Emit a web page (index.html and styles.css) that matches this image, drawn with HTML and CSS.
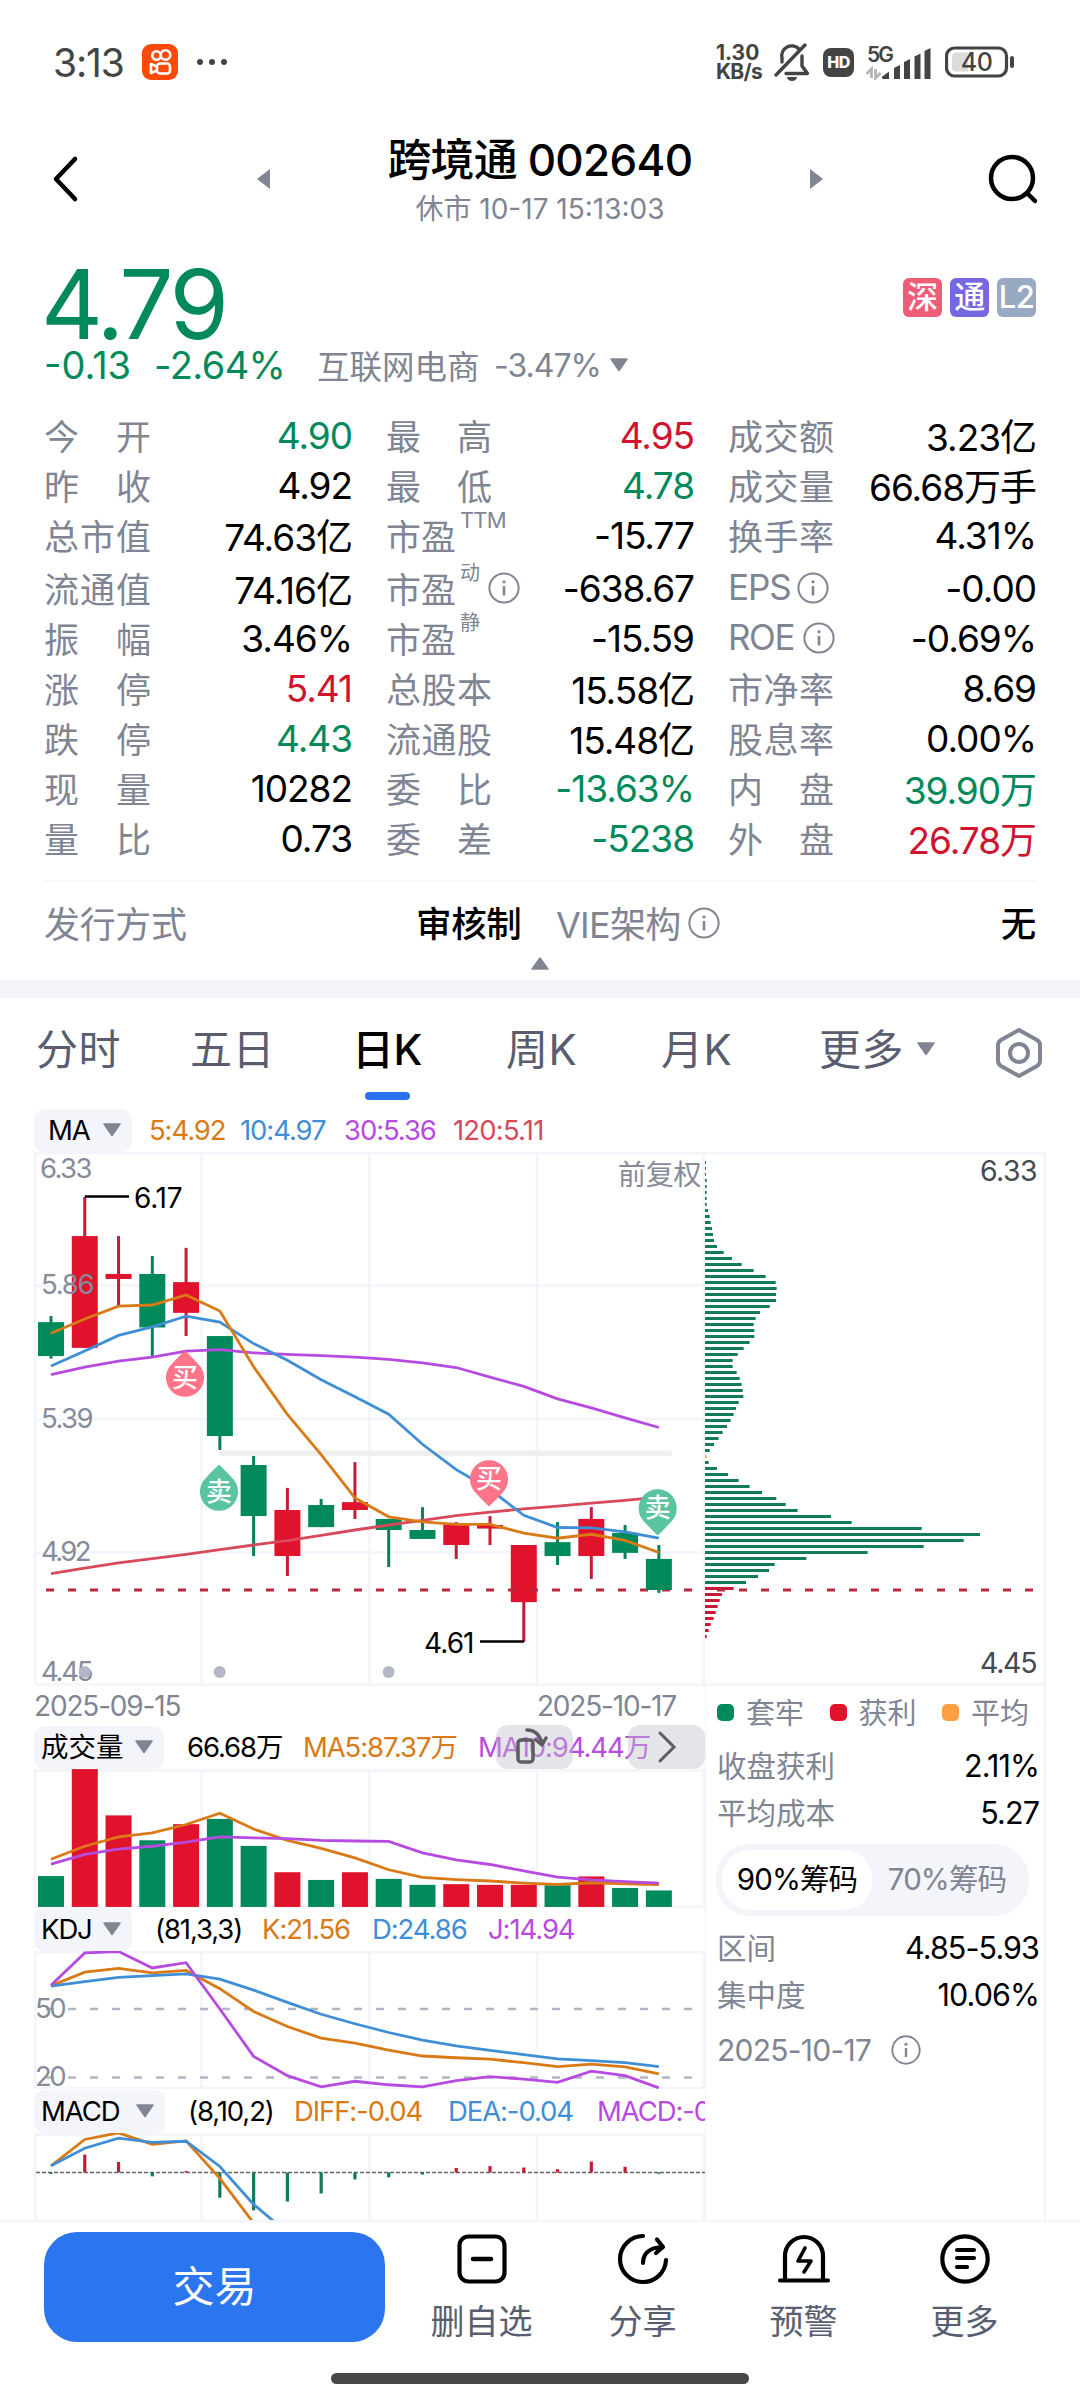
FILE: index.html
```html
<!DOCTYPE html>
<html lang="zh-CN">
<head>
<meta charset="utf-8">
<title>跨境通 002640</title>
<link rel="stylesheet" href="styles.css">
</head>
<body>
<svg class="defs" width="0" height="0">
  <symbol id="info" viewBox="0 0 32 32"><circle cx="16" cy="16" r="14.6" fill="none" stroke="#808593" stroke-width="2"/><circle cx="16" cy="9.8" r="1.6" fill="#808593"/><path d="M16 14v9.5" stroke="#808593" stroke-width="2.6"/></symbol>
  <symbol id="down" viewBox="0 0 20 14"><path d="M2 1h16L10 12.500z" fill="#808593" stroke="#808593" stroke-width="1.500" stroke-linejoin="round"/></symbol>
</svg>

<div class="status">
  <span class="clock">3:13</span>
  <svg class="app" width="36" height="36" viewBox="0 0 36 36"><rect width="36" height="36" rx="9" fill="#fe4a08"/><g fill="none" stroke="#fff" stroke-width="2.600"><circle cx="14.500" cy="11.500" r="4.200"/><circle cx="23.500" cy="11" r="4.800"/><rect x="15" y="19.500" width="13" height="10" rx="3"/><path d="M15 22.500l-6-2.500v9l6-2.500" stroke-linejoin="round"/></g></svg>
  <svg width="32" height="8" viewBox="0 0 32 8"><g fill="#444"><circle cx="4" cy="4" r="3"/><circle cx="16" cy="4" r="3"/><circle cx="28" cy="4" r="3"/></g></svg>
  <div class="speed"><span class="num">1.30</span><span>KB/s</span></div>
  <svg class="bell" width="36" height="40" viewBox="0 0 36 40"><g fill="none" stroke="#444" stroke-width="3.400" stroke-linecap="round" stroke-linejoin="round"><path d="M8 20v-4a10 10 0 0 1 17-9M28 14v10l5.500 7.500H12"/><path d="M31 3L2 33"/></g><path d="M13 35h10a5 4 0 0 1-10 0z" fill="#444"/></svg>
  <span class="hd">HD</span>
  <svg class="signal" width="66" height="36" viewBox="0 0 66 36"><text x="1" y="18" class="t5g" textLength="27">5G</text><path d="M5.500 34V25L0.500 30M9.500 25v9l5-5" stroke="#b4b4b4" fill="none" stroke-width="2.800"/><g fill="#444"><path d="M18 35a1.500 1.500 0 0 1-1-3l6-4.500V35zM28 24l6-3V35h-6zM38 18l6-3V35h-6zM48.500 12.500l6-3V35h-6zM58.500 7l6-3V35h-6z"/></g></svg>
  <svg class="battery" width="70" height="32" viewBox="0 0 70 32"><rect x="1.500" y="2" width="60" height="28" rx="8" fill="none" stroke="#444" stroke-width="3.200"/><path d="M11 6.500h12v19h-12a4 4 0 0 1-4-4v-11a4 4 0 0 1 4-4z" fill="#dcdcdc"/><path d="M67 12v8" stroke="#444" stroke-width="4" stroke-linecap="round"/><text x="31.500" y="24.500" class="tbat" text-anchor="middle">40</text></svg>
</div>

<header class="head">
  <svg width="40" height="50" viewBox="0 0 40 50"><path d="M28 5L9 25l19 20" fill="none" stroke="#000" stroke-width="4.500" stroke-linecap="round" stroke-linejoin="round"/></svg>
  <svg width="14" height="20" viewBox="0 0 14 20"><path d="M13 0v20L0 10z" fill="#808593"/></svg>
  <div class="title"><h1>跨境通 <span>002640</span></h1><p>休市 10-17 15:13:03</p></div>
  <svg width="14" height="20" viewBox="0 0 14 20"><path d="M1 0v20L14 10z" fill="#808593"/></svg>
  <svg width="52" height="52" viewBox="0 0 52 52"><g fill="none" stroke="#000" stroke-width="4.500" stroke-linecap="round"><circle cx="25" cy="25" r="21"/><path d="M40 40l8 8"/></g></svg>
</header>

<section class="quote">
  <div class="price-row"><span class="price">4.79</span><span class="badge sz">深</span><span class="badge tong">通</span><span class="badge l2">L2</span></div>
  <div class="change"><span class="chg">-0.13</span><span class="pct">-2.64%</span><span class="ind">互联网电商</span><span class="indpct">-3.47%</span><svg width="20" height="14"><use href="#down"/></svg></div>
  <div class="stats" id="stats">
    <div class="row"><span class="lb"><i>今</i><i>开</i></span><b class="g">4.90</b><span class="lb"><i>最</i><i>高</i></span><b class="r">4.95</b><span class="lb"><i>成</i><i>交</i><i>额</i></span><b>3.23亿</b></div>
    <div class="row"><span class="lb"><i>昨</i><i>收</i></span><b>4.92</b><span class="lb"><i>最</i><i>低</i></span><b class="g">4.78</b><span class="lb"><i>成</i><i>交</i><i>量</i></span><b>66.68万手</b></div>
    <div class="row"><span class="lb"><i>总</i><i>市</i><i>值</i></span><b>74.63亿</b><span class="lb pe">市盈<sup class="ttm">TTM</sup></span><b>-15.77</b><span class="lb"><i>换</i><i>手</i><i>率</i></span><b>4.31%</b></div>
    <div class="row tall"><span class="lb"><i>流</i><i>通</i><i>值</i></span><b>74.16亿</b><span class="lb pe">市盈<sup>动</sup><svg class="info"><use href="#info"/></svg></span><b>-638.67</b><span class="lb en"><em class="eps">EPS</em><svg class="info"><use href="#info"/></svg></span><b>-0.00</b></div>
    <div class="row"><span class="lb"><i>振</i><i>幅</i></span><b>3.46%</b><span class="lb pe">市盈<sup>静</sup></span><b>-15.59</b><span class="lb en"><em class="roe">ROE</em><svg class="info"><use href="#info"/></svg></span><b>-0.69%</b></div>
    <div class="row"><span class="lb"><i>涨</i><i>停</i></span><b class="r">5.41</b><span class="lb"><i>总</i><i>股</i><i>本</i></span><b>15.58亿</b><span class="lb"><i>市</i><i>净</i><i>率</i></span><b>8.69</b></div>
    <div class="row"><span class="lb"><i>跌</i><i>停</i></span><b class="g">4.43</b><span class="lb"><i>流</i><i>通</i><i>股</i></span><b>15.48亿</b><span class="lb"><i>股</i><i>息</i><i>率</i></span><b>0.00%</b></div>
    <div class="row"><span class="lb"><i>现</i><i>量</i></span><b>10282</b><span class="lb"><i>委</i><i>比</i></span><b class="g">-13.63%</b><span class="lb"><i>内</i><i>盘</i></span><b class="g">39.90万</b></div>
    <div class="row"><span class="lb"><i>量</i><i>比</i></span><b>0.73</b><span class="lb"><i>委</i><i>差</i></span><b class="g">-5238</b><span class="lb"><i>外</i><i>盘</i></span><b class="r">26.78万</b></div>
  </div>
  <div class="issue"><span>发行方式</span><strong>审核制</strong><span class="vie">VIE架构</span><svg class="info"><use href="#info"/></svg><strong class="none">无</strong></div>
  <svg class="fold" width="20" height="14" viewBox="0 0 20 14"><path d="M2 13h16L10 2z" fill="#808593" stroke="#808593" stroke-width="1.500" stroke-linejoin="round"/></svg>
</section>

<nav class="tabs">
  <span class="t1">分时</span><span class="t2">五日</span><span class="t3 on">日K</span><span class="t4">周K</span><span class="t5">月K</span><span class="t6">更多</span><svg class="more" width="20" height="14"><use href="#down"/></svg>
  <svg class="hex" width="50" height="52" viewBox="0 0 50 52"><g fill="none" stroke="#808593" stroke-width="4" stroke-linejoin="round"><path d="M25 3l18 10q3 2 3 5v16q0 3-3 5L25 49 7 39q-3-2-3-5V18q0-3 3-5z"/><circle cx="25" cy="26" r="9"/></g></svg>
</nav>

<section class="charts">
  <div class="ind-row ma"><span class="chip c-ma">MA<svg width="20" height="14"><use href="#down"/></svg></span><span class="o m1">5:4.92</span><span class="bl m2">10:4.97</span><span class="p m3">30:5.36</span><span class="rd m4">120:5.11</span></div>
  <svg id="price" width="1012" height="534" viewBox="34 1152 1012 534">
    <g fill="none" stroke="#f4f5fa" stroke-width="2.500"><path d="M34 1153.300H1046M34 1285.500H704M34 1419H704M34 1552.500H704M34 1684.600H1046"/><path d="M35.300 1152v534M201.700 1152v534M369.500 1152v534M537 1152v534M703.700 1152v534M1045 1152v534"/></g>
    <path d="M220 1453.300H671.700" stroke="#efefef" stroke-width="5.500"/>
    <g id="candles"></g>
    <g id="chips"></g>
    <path d="M46 1590H700M717 1590H1036" stroke="#b92740" stroke-width="3" stroke-dasharray="8 14"/>
    <g id="over"></g>
    <g class="axis"><text x="40" y="1178" textLength="52">6.33</text><text x="41" y="1294" textLength="53">5.86</text><text x="41" y="1428" textLength="52">5.39</text><text x="41" y="1561" textLength="50">4.92</text><text x="41" y="1681" textLength="52">4.45</text></g>
    <text x="618" y="1185" class="fq" textLength="83">前复权</text>
    <g class="axis dark"><text x="980" y="1181" textLength="57">6.33</text><text x="980" y="1673" textLength="57">4.45</text></g>
    <g fill="none" stroke="#000" stroke-width="2.500"><path d="M84.700 1196.400H129M480 1641.400H524"/></g>
    <g class="mark"><text x="134" y="1208" textLength="48">6.17</text><text x="424" y="1653" textLength="50">4.61</text></g>
    <g fill="#b1b7c6"><circle cx="84.700" cy="1672" r="6"/><circle cx="219.700" cy="1672" r="6"/><circle cx="388.600" cy="1672" r="6"/></g>
    <g id="pins"></g>
  </svg>
  <div class="lower">
    <div class="panes">
      <div class="dates"><span>2025-09-15</span><span>2025-10-17</span></div>
      <div class="ind-row volrow"><span class="chip c-vol"><em>成交量</em><svg width="20" height="14"><use href="#down"/></svg></span><span class="up v1">66.68万</span><span class="up o v2">MA5:87.37万</span><span class="up p v3">MA10:94.44万</span>
        <div class="float rot"><svg width="34" height="40" viewBox="0 0 34 40"><g fill="none" stroke="#5d5e62" stroke-width="3.500" stroke-linecap="round" stroke-linejoin="round"><rect x="4" y="13" width="15" height="22" rx="3"/><path d="M13 3c8 0 13 5 15 14M22 13l6 5 4-7"/></g></svg></div>
        <div class="float next"><svg width="20" height="34" viewBox="0 0 20 34"><path d="M3 3l14 14L3 31" fill="none" stroke="#5d5e62" stroke-width="3" stroke-linecap="round"/></svg></div>
      </div>
      <svg id="vol" width="671" height="139" viewBox="34 1769 671 139"><path class="grid" d="M34 1770.500H705M34 1906.700H705M35.300 1769v139M201.700 1769v139M369.500 1769v139M537 1769v139M703.700 1769v139"/></svg>
      <div class="ind-row h43"><span class="chip c-kdj">KDJ<svg width="20" height="14"><use href="#down"/></svg></span><span class="k1">(81,3,3)</span><span class="o k2">K:21.56</span><span class="bl k3">D:24.86</span><span class="p k4">J:14.94</span></div>
      <svg id="kdj" width="671" height="138" viewBox="34 1951 671 138"><path class="grid" d="M34 1952.300H705M34 2088H705M35.300 1951v138M201.700 1951v138M369.500 1951v138M537 1951v138M703.700 1951v138"/><path d="M46 2009H695M46 2077.500H695" stroke="#b1b7c6" stroke-width="2.500" stroke-dasharray="8 14"/><g class="axis"><text x="35" y="2018" textLength="31">50</text><text x="35" y="2086" textLength="31">20</text></g></svg>
      <div class="ind-row"><span class="chip c-macd">MACD<svg width="20" height="14"><use href="#down"/></svg></span><span class="d1">(8,10,2)</span><span class="o d2">DIFF:-0.04</span><span class="bl d3">DEA:-0.04</span><span class="p d4">MACD:-0.01</span></div>
      <svg id="macd" width="671" height="87" viewBox="34 2133 671 87"><path class="grid" d="M34 2134.500H705M35.300 2133v87M201.700 2133v87M369.500 2133v87M537 2133v87M703.700 2133v87"/><path d="M36 2172.500H705" stroke="#666" stroke-width="1.600" stroke-dasharray="4 2"/></svg>
    </div>
    <aside class="cost">
      <div class="legend"><i class="sq sg"></i><span>套牢</span><i class="sq sr"></i><span>获利</span><i class="sq so"></i><span>平均</span></div>
      <div class="kv"><span>收盘获利</span><b>2.11%</b></div>
      <div class="kv"><span>平均成本</span><b>5.27</b></div>
      <div class="seg"><span class="sel">90%筹码</span><span>70%筹码</span></div>
      <div class="kv"><span>区间</span><b>4.85-5.93</b></div>
      <div class="kv"><span>集中度</span><b>10.06%</b></div>
      <div class="cdate"><span>2025-10-17</span><svg class="info"><use href="#info"/></svg></div>
    </aside>
  </div>
</section>

<footer class="bar">
  <button class="trade">交易</button>
  <div class="act"><svg width="60" height="60" viewBox="0 0 60 60"><g fill="none" stroke="#000" stroke-width="4.200" stroke-linecap="round"><rect x="7.500" y="7.500" width="45" height="45" rx="9"/><path d="M21 30h18" stroke-width="4.500"/></g></svg><span>删自选</span></div>
  <div class="act"><svg width="60" height="60" viewBox="0 0 60 60"><g fill="none" stroke="#000" stroke-width="4.200" stroke-linecap="round" stroke-linejoin="round"><path d="M30 7A23 23 0 1 0 53 31"/><path d="M30 34c0-9 6-15 18-16M44 10.500l6 7.500-7 6"/></g></svg><span>分享</span></div>
  <div class="act"><svg width="60" height="60" viewBox="0 0 60 60"><g fill="none" stroke="#000" stroke-width="4.200" stroke-linecap="round" stroke-linejoin="round"><path d="M11 51V27a19 19 0 0 1 38 0v24M6 51.500h48"/><path d="M31 19l-7 13h13l-7 11" stroke-width="3.600"/></g></svg><span>预警</span></div>
  <div class="act"><svg width="60" height="60" viewBox="0 0 60 60"><g fill="none" stroke="#000" stroke-width="4.200" stroke-linecap="round"><circle cx="30" cy="30" r="22.700"/><path d="M22 21h17M22 29h17M22 38h10"/></g></svg><span>更多</span></div>
  <div class="gesture"></div>
</footer>
<script src="chart.js"></script>
</body>
</html>
```
FILE: styles.css
```css
* { box-sizing: border-box; margin: 0; padding: 0; }
body { width: 1080px; height: 2400px; overflow: hidden; background: #fff; color: #000; font-family: Inter, "Noto Sans CJK SC", sans-serif; letter-spacing: -0.03em; white-space: nowrap; }
svg { display: block; flex: none; overflow: hidden; }
svg.defs { position: absolute; }
i, em { font-style: normal; }
b { font-weight: 400; }
.info { width: 32px; height: 32px; }

/* status bar */
.status { height: 130px; padding: 0 65px 6px 53px; display: flex; align-items: center; color: #444; }
.clock { font-size: 39px; width: 89px; letter-spacing: -0.03em; }
.app { margin-right: 18px; }
.speed { margin-left: auto; width: 58px; display: flex; flex-direction: column; font-size: 21px; line-height: 19px; font-weight: 700; letter-spacing: -0.035em; }
.speed .num { letter-spacing: 0; }
.bell { margin-right: 13px; }
.hd { width: 31px; height: 29px; border-radius: 8px; background: #444; color: #fff; font-size: 16px; font-weight: 800; line-height: 29px; text-align: center; margin-right: 12px; }
.signal { margin-right: 13px; }
.t5g { font-size: 21px; font-weight: 600; fill: #444; letter-spacing: 0; }
.tbat { font-size: 25px; fill: #444; font-weight: 500; }

/* header */
.head { height: 98px; display: flex; align-items: center; padding: 0 41px 0 47px; }
.head svg:nth-child(2) { margin-left: 170px; }
.title { width: 538px; text-align: center; }
.head svg:nth-child(4) { margin-right: 164px; }
.title h1 { font-size: 44px; line-height: 60px; font-weight: 500; letter-spacing: -0.02em; }
.title h1 span { font-weight: 450; letter-spacing: -0.015em; }
.title p { font-size: 28px; line-height: 38px; color: #808593; letter-spacing: 0; }
.head svg:last-child { margin-left: auto; }

/* quote */
.quote { height: 770px; border-bottom: 18px solid #f4f5fa; padding: 31px 44px 0; }
.price-row { display: flex; height: 90px; gap: 8px; align-items: center; }
.price { font-size: 96px; line-height: 90px; font-weight: 400; color: #008a5c; letter-spacing: -0.035em; margin: 0 auto 0 -3px; }
.badge { width: 39px; height: 39px; border-radius: 6px; color: #fff; font-size: 31px; line-height: 37px; font-weight: 500; text-align: center; margin-bottom: 13px; letter-spacing: -0.02em; }
.sz { background: #ee5d77; } .tong { background: #7668e0; } .l2 { background: #98a9c3; }
.change { display: flex; height: 32px; align-items: center; color: #808593; font-size: 33px; }
.chg, .pct { color: #008a5c; font-size: 38px; }
.chg { width: 110px; letter-spacing: 0; } .pct { width: 163px; letter-spacing: -0.015em; } .ind { width: 177px; letter-spacing: 0; font-size: 32.500px; margin-top: -2px; } .indpct { width: 115px; font-size: 32px; letter-spacing: -0.03em; }
.stats { margin-top: 29px; }
.row { display: flex; height: 50px; align-items: center; font-size: 37px; }
.row.tall { height: 53px; padding-top: 3px; }
.lb { display: flex; align-items: center; justify-content: space-between; width: 110px; font-size: 35px; color: #808593; letter-spacing: 0; padding: 0 3px 0 0; margin-top: -2px; }
.lb:nth-child(n + 2) { padding: 0 2px; }
.lb.pe, .lb.en { width: 200px; justify-content: flex-start; margin-right: -90px; }
.row b { width: 198px; text-align: right; letter-spacing: -0.028em; }
.row b:nth-child(2) { margin-right: 32px; }
.row b:nth-child(4) { width: 200px; margin-right: 32px; }
.row b:nth-child(6) { width: 200px; }
.lb sup { font-size: 20px; margin-left: 4px; align-self: flex-start; line-height: 23px; width: 28px; }
.lb .ttm { font-size: 22px; letter-spacing: -0.04em; }
.lb .info { margin-top: 2px; }
.eps { width: 69px; letter-spacing: -0.03em; } .roe { width: 75px; letter-spacing: -0.04em; }
.g { color: #008a5c; } .r { color: #d0142f; }
.issue { margin-top: 17px; border-top: 2px solid #f7f8fa; padding-top: 16px; height: 68px; display: flex; align-items: center; font-size: 36px; color: #808593; letter-spacing: -0.01em; }
.issue span, .issue strong { margin-top: -3px; }
.issue span:first-child { width: 372px; }
.issue strong { color: #000; font-weight: 500; width: 140px; font-size: 35.500px; }
.vie { width: 132px; letter-spacing: -0.02em; }
.issue .none { margin-left: auto; width: auto; }
.fold { margin: 8px auto 0; }

/* tabs */
.tabs { height: 102px; display: flex; align-items: center; padding-left: 36px; font-size: 42px; color: #585e70; letter-spacing: 0.01em; }
.tabs span { line-height: 102px; position: relative; top: 1px; }
.t1 { width: 154px; } .t2 { width: 162px; } .t3 { width: 154px; } .t4 { width: 155px; } .t5 { width: 158px; } .t6 { width: 97px; }
.tabs .on { color: #000; font-weight: 500; letter-spacing: -0.01em; }
.on::after { content: ""; position: absolute; left: 13px; bottom: 1px; width: 45px; height: 8px; border-radius: 4px; background: #2b73ee; }
.hex { margin: 8px 0 0 58px; }

/* charts */
.charts { padding: 8px 34px 0; }
.ind-row { display: flex; height: 44px; align-items: center; font-size: 27.500px; letter-spacing: -0.04em; position: relative; overflow: hidden; width: 671px; }
.h43 { height: 43px; padding-bottom: 1px; }
.chip { height: 43px; display: flex; align-items: center; justify-content: space-between; background: #f4f5fa; border-radius: 10px; padding: 0 10px 0 7px; flex: none; }
.ind-row span { flex: none; }
.ind-row .up, .chip em { margin-top: -4px; }
.c-ma { width: 98px; margin-right: 17px; padding-left: 14px; }
.m1 { width: 91px; } .m2 { width: 104px; } .m3 { width: 109px; } .m4 { letter-spacing: -0.03em; }
.c-vol { width: 130px; margin-right: 23px; letter-spacing: 0; }
.v1 { width: 116px; } .v2 { width: 175px; }
.c-kdj { width: 98px; margin-right: 23px; }
.k1 { width: 107px; } .k2 { width: 110px; } .k3 { width: 116px; }
.c-macd { width: 131px; margin-right: 23px; }
.d1 { width: 106px; } .d2 { width: 154px; } .d3 { width: 149px; }
.o { color: #d97a16; } .bl { color: #3f8ed6; } .p { color: #b74be0; } .rd { color: #d84a5b; }
.float { position: absolute; top: 0; height: 44px; width: 77px; border-radius: 12px; background: rgba(190, 193, 203, .42); display: flex; align-items: center; justify-content: center; }
.rot { left: 462px; padding-right: 7px; } .next { left: 594px; }
.lower { display: flex; height: 534px; overflow: hidden; }
.panes { width: 671px; flex: none; }
.dates { height: 39px; display: flex; justify-content: space-between; align-items: center; padding-right: 29px; font-size: 28px; color: #808593; letter-spacing: -0.042em; }
.grid { fill: none; stroke: #f4f5fa; stroke-width: 2.500px; }
.axis { font-size: 27.500px; fill: #868b99; }
.dark { fill: #444b50; font-size: 28.500px; }
.fq { font-size: 28px; fill: #868b99; }
.mark { font-size: 28px; fill: #000; }
.pin { font-size: 26px; fill: #fff; font-weight: 500; text-anchor: middle; letter-spacing: 0; }
.cost { width: 341px; border-right: 2px solid #f4f5fa; border-left: 1px solid #f4f5fa; padding: 0 5px 0 11px; color: #808593; font-size: 29.500px; letter-spacing: 0; }
.legend { height: 53px; display: flex; align-items: center; font-size: 29px; }
.legend span { flex: none; width: 83.500px; margin-top: -3px; }
.legend span:last-child { width: 60px; }
.sq { width: 17px; height: 17px; border-radius: 5px; margin-right: 12px; flex: none; }
.sg { background: #008a5c; } .sr { background: #e1122c; } .so { background: #fe9f43; }
.kv { display: flex; justify-content: space-between; align-items: center; height: 47px; }
.kv span { margin-top: -3px; }
.legend + .kv { margin-top: 3px; }
.kv b { color: #000; font-size: 30.500px; letter-spacing: -0.03em; }
.seg { margin: 8px 0 8px -1px; width: 313px; height: 72px; background: #f4f5fa; border-radius: 34px; padding: 6px; display: flex; letter-spacing: -0.03em; }
.seg span { width: 150px; height: 60px; line-height: 58px; text-align: center; }
.seg .sel { background: #fff; border-radius: 28px; color: #000; }
.cdate { display: flex; align-items: center; height: 61px; letter-spacing: -0.025em; font-size: 30px; padding-top: 2px; }
.cdate span { width: 174px; }
.cdate .info { width: 30px; height: 30px; }

/* bottom bar */
.bar { height: 180px; border-top: 2px solid #f4f5fa; background: #fff; display: flex; padding: 10px 34px 0 44px; position: relative; }
.trade { width: 341px; height: 110px; border: 0; border-radius: 33px; background: #2b75ee; color: #fff; font: 42px/110px Inter, "Noto Sans CJK SC", sans-serif; margin-right: 16px; }
.act { width: 161px; display: flex; flex-direction: column; align-items: center; font-size: 34px; color: #585e70; letter-spacing: 0; line-height: 50px; }
.act svg { margin: -3px 0 8px; }
.gesture { position: absolute; left: 331px; top: 151px; width: 418px; height: 11px; border-radius: 6px; background: #474747; }
```
FILE: chart.js
```js
const NS = 'http://www.w3.org/2000/svg';
const GREEN = '#008a5c', RED = '#e1122c';
const ORANGE = '#d97a16', BLUE = '#3f8ed6', PURPLE = '#b74be0', ROSE = '#d84a5b';
const $ = id => document.getElementById(id);
const cx = i => 51 + i * 33.77;

function add(parent, tag, attrs, text) {
  const n = document.createElementNS(NS, tag);
  for (const k in attrs) n.setAttribute(k, attrs[k]);
  if (text) n.textContent = text;
  parent.appendChild(n);
  return n;
}
function line(parent, data, y, color) {
  add(parent, 'polyline', { points: data.map((v, i) => cx(i) + ',' + y(v)).join(' '), fill: 'none', stroke: color, 'stroke-width': 2.8 });
}
const py = v => v / 2.8 + 1140;
const ly = v => v / 2.851 + 1680;

// direction, body top, body bottom, high, low
const candles = [
  ['g',510,605,493,612],['r',269,582,160,582],['r',375,389,269,462],['g',375,525,325,605],['r',398,484,302,549],
  ['g',549,829,549,868],['g',910,1053,885,1165],['r',1036,1165,974,1221],['g',1022,1084,1005,1084],['r',1014,1036,902,1061],
  ['g',1061,1092,1061,1196],['g',1092,1117,1028,1117],['r',1078,1134,1070,1173],['r',1078,1088,1053,1134],['r',1134,1294,1134,1405],
  ['g',1126,1165,1070,1190],['r',1061,1165,1028,1229],['g',1100,1156,1078,1173],['g',1173,1260,1134,1268]
];
candles.forEach(([d, t, b, h, l], i) => {
  const c = d === 'g' ? GREEN : RED, g = $(i === 18 ? 'over' : 'candles');
  add(g, 'rect', { x: cx(i) - 1.5, y: py(h), width: 3, height: (l - h) / 2.8, fill: d === 'g' ? '#08805a' : '#c41c36' });
  add(g, 'rect', { x: cx(i) - 13, y: py(t), width: 26, height: (b - t) / 2.8, fill: c });
});
line($('over'), [1214,1199,1184,1172,1160,1147,1134,1122,1107,1092,1078,1065,1052,1042,1033,1025,1017,1009,1000], py, ROSE);
line($('over'), [657,636,619,608,591,587,596,600,604,608,614,624,637,664,690,725,750,778,805], py, PURPLE);
line($('over'), [633,591,547,523,493,510,570,617,671,719,768,852,923,978,1051,1085,1086,1097,1115], py, BLUE);
line($('over'), [541,501,465,462,434,479,635,768,881,1002,1055,1069,1076,1076,1101,1115,1104,1121,1155], py, ORANGE);

// cost distribution, one bar per price level
const chips = [3,3,3,5,5,5,5,5,9,14,17,21,24,27,36,56,81,110,146,182,212,215,213,213,194,165,152,146,148,148,134,116,98,83,83,95,104,110,113,115,101,93,86,77,66,53,41,27,14,5,11,36,69,101,134,171,214,242,278,378,440,650,825,776,656,488,304,209,192,159,123,86,51,44,38,32,26,17,11,5];
chips.forEach((w, k) => add($('chips'), 'rect', { x: 705, y: 1161 + k * 6, width: w / 3, height: 3, fill: k === 49 ? '#f0a860' : k > 70 ? '#c41c36' : '#127c5a' }));

// trade markers: x, circle centre y, tip direction, label
[[185,1378,-1,'买'],[219,1492,-1,'卖'],[489,1479,1,'买'],[657.7,1508,1,'卖']].forEach(([x, y, s, t]) => {
  const tip = y + s * 27.5, e = y + s * 12, f = s > 0 ? 0 : 1;
  add($('pins'), 'path', { d: `M${x - 15} ${e}A19 19 0 1 ${1 - f} ${x + 15} ${e}Q${x + 8} ${y + s * 20} ${x} ${tip}Q${x - 8} ${y + s * 20} ${x - 15} ${e}z`, fill: t === '买' ? '#ff6f85' : '#55c19d', 'fill-opacity': .97 });
  add($('pins'), 'text', { x, y: y + 9, class: 'pin' }, t);
});

const vol = ['g559','r254','r386','g457','r411','g396','g473','r548','g570','r548','g567','g584','r582','r584','r584','g585','r560','g593','g600'];
vol.forEach((s, i) => { const t = +s.slice(1); add($('vol'), 'rect', { x: cx(i) - 13, y: ly(t), width: 26, height: (647 - t) / 2.851, fill: s[0] === 'g' ? GREEN : RED }); });
line($('vol'), [511,474,447,436,412,380,425,457,480,507,541,563,569,573,579,583,578,581,583], ly, ORANGE);
line($('vol'), [525,497,482,474,462,447,450,452,457,459,460,493,513,526,544,562,570,575,579], ly, PURPLE);

line($('kdj'), [872,833,822,835,828,880,945,988,1021,1035,1055,1072,1077,1081,1091,1102,1095,1103,1123], ly, ORANGE);
line($('kdj'), [873,860,848,843,838,853,884,919,953,980,1005,1027,1043,1056,1068,1080,1085,1091,1102], ly, BLUE);
line($('kdj'), [870,778,774,821,806,938,1073,1128,1160,1144,1154,1160,1142,1131,1138,1147,1115,1128,1163], ly, PURPLE);

[1408,1353,1374,1415,1400,1476,1512,1487,1464,1424,1418,1410,1391,1386,1390,1395,1373,1388,1408].forEach((v, i) =>
  add($('macd'), 'rect', { x: cx(i) - 1.6, y: ly(Math.min(v, 1404)), width: 3.2, height: Math.abs(v - 1404) / 2.851, fill: v > 1404 ? '#127c5a' : '#c41c36' }));
line($('macd'), [1385,1310,1291,1324,1314,1421,1548], ly, ORANGE);
line($('macd'), [1385,1335,1306,1318,1315,1387,1495,1576], ly, BLUE);
```
